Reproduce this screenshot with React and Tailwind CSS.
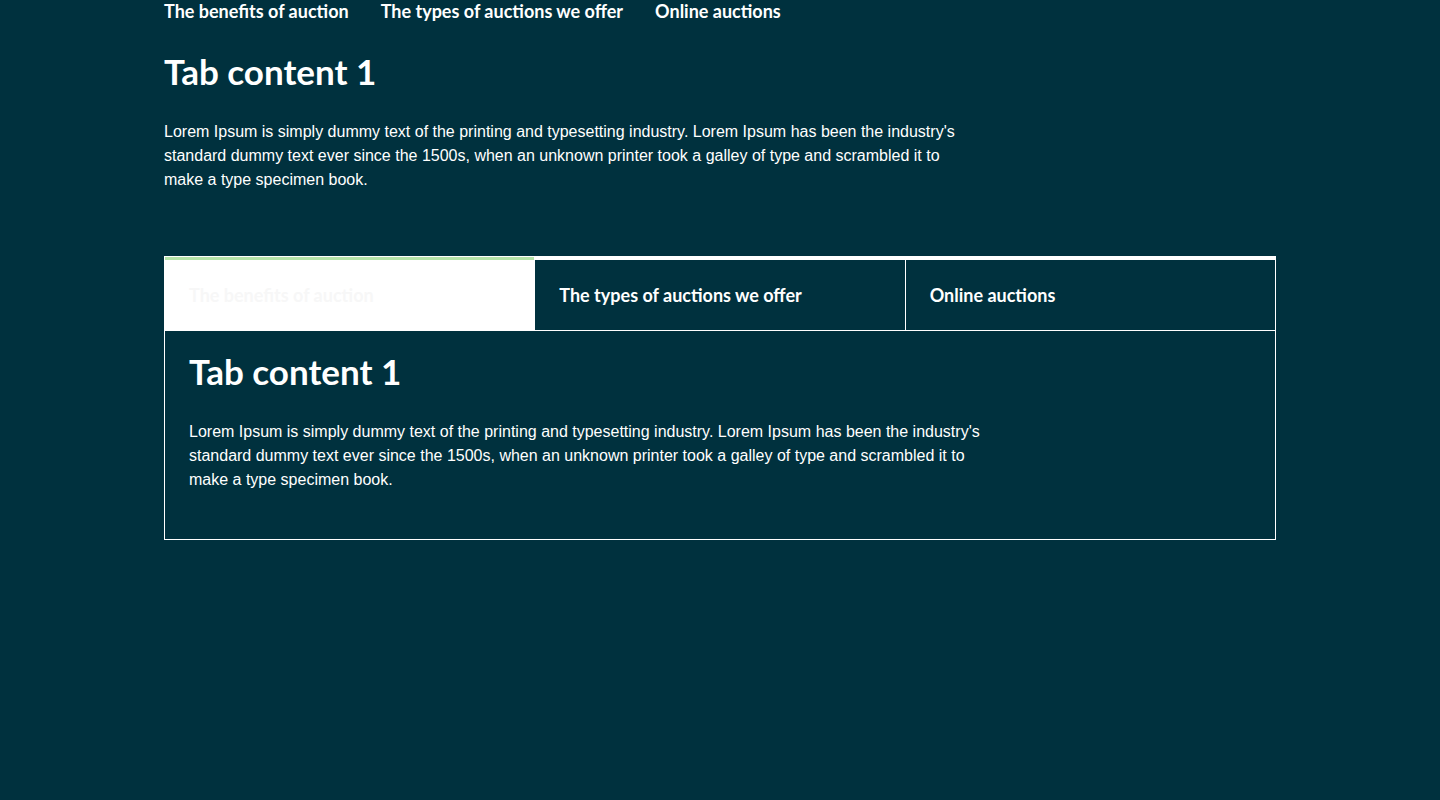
import React, { useState } from 'react';

const tabs = ['The benefits of auction', 'The types of auctions we offer', 'Online auctions'];

const lorem =
    "Lorem Ipsum is simply dummy text of the printing and typesetting industry. Lorem Ipsum has been the industry's standard dummy text ever since the 1500s, when an unknown printer took a galley of type and scrambled it to make a type specimen book.";

const headFont = { fontFamily: 'Lato, "Noto Sans", sans-serif' };

function TabPanel() {
    return (
        <div>
            <h2 className="text-[35px] leading-[44px] font-bold text-white" style={headFont}>Tab content 1</h2>
            <p className="mt-[27px] max-w-[800px] text-[16px] leading-[24px] text-white font-['Liberation_Sans',Arial,sans-serif]">{lorem}</p>
        </div>
    );
}

export default function App() {
    const [active, setActive] = useState(0);

    return (
        <div className="min-h-[800px] bg-[#00313e]">
            <div className="w-[1112px] ml-[164px]">
                <nav className="flex gap-8 h-[22px] items-center text-[18px] font-bold text-white" style={headFont}>
                    {tabs.map((t) => <a key={t} href="#" className="leading-[22px]">{t}</a>)}
                </nav>
                <div className="mt-[27px]">
                    <TabPanel />
                </div>

                <div className="mt-[64px] border border-white">
                    <div className="flex border-b border-white">
                        {tabs.map((t, i) => (
                            <button
                                key={t}
                                onClick={() => setActive(i)}
                                className={`flex-1 h-[73px] text-left pl-6 border-t-[3px] text-[18px] font-bold ${i > 0 ? 'border-l border-l-white' : ''} ${i === active ? 'bg-white border-t-[#b5e3a8] text-[#f7f7f7]' : 'border-t-white text-white'}`}
                                style={headFont}
                            >
                                {t}
                            </button>
                        ))}
                    </div>
                    <div className="px-6 pt-[18px] h-[208px]">
                        <TabPanel />
                    </div>
                </div>
            </div>
        </div>
    );
}
